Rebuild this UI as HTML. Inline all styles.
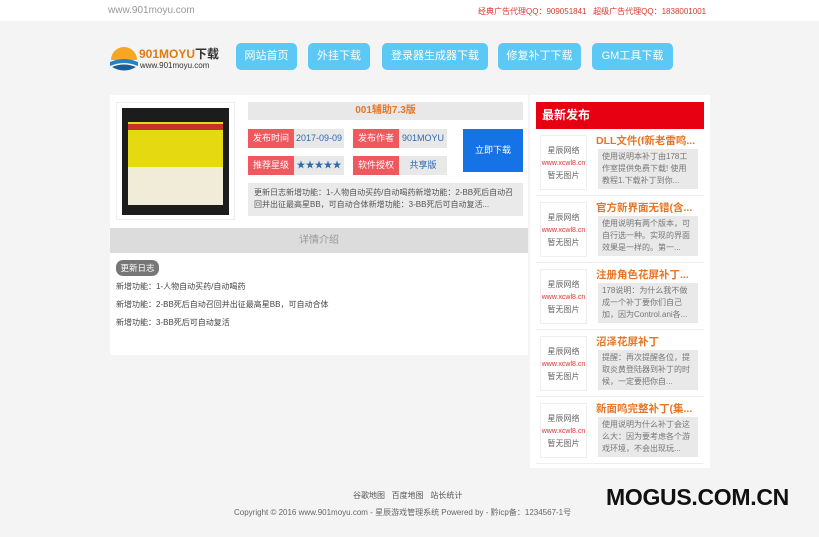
<!DOCTYPE html><html><head><meta charset="utf-8"><style>
*{margin:0;padding:0;box-sizing:border-box}
body{width:819px;height:537px;background:#f4f4f4;font-family:"Liberation Sans","Noto Sans CJK SC",sans-serif;position:relative;overflow:hidden;font-size:9px;color:#555}
.a{position:absolute}
.nav{position:absolute;top:43px;height:27px;background:#5bc8f5;color:#fff;border-radius:5px;font-size:11px;line-height:27px;text-align:center}
.lab{position:absolute;height:19px;line-height:19px;text-align:center;font-size:9px}
.red{background:#f0585e;color:#fff}
.gr{background:#e8e8e8;color:#2b6bb0}
.it{position:absolute;left:536px;width:168px;height:66px;border-bottom:1px solid #eee}
.it .im{position:absolute;left:4px;top:5px;width:47px;height:55px;border:1px solid #eee;text-align:center;font-size:8px;color:#666;padding-top:9px;line-height:12px}
.it .t{position:absolute;left:60px;top:3px;font-size:10.5px;font-weight:bold;color:#e57628;white-space:nowrap}
.it .d{position:absolute;left:62px;top:19px;width:100px;height:40px;background:#e9e9e9;font-size:8px;line-height:12px;color:#777;padding:2px 4px;overflow:hidden}
</style></head><body>
<div class="a" style="left:0;top:0;width:819px;height:21px;background:#fff"></div>
<div class="a" style="left:108px;top:5px;font-size:10px;color:#999">www.901moyu.com</div>
<div class="a" style="left:478px;top:6px;font-size:8px;color:#d9382f;white-space:nowrap">经典广告代理QQ：909051841&nbsp;&nbsp;&nbsp;超级广告代理QQ：1838001001</div>
<svg class="a" style="left:109px;top:43px" width="30" height="30"><path d="M2 17 A13 13 0 0 1 28 17Z" fill="#f5a623"/><path d="M1 19 Q15 13 29 19 L29 23 Q15 17 1 23Z" fill="#2a7fc0"/><path d="M3 24 Q15 19 27 24 Q15 31 3 24Z" fill="#1a5c95"/></svg>
<div class="a" style="left:139px;top:45px;font-size:12px;font-weight:bold;color:#e07b10">901MOYU<span style="color:#333">下载</span></div>
<div class="a" style="left:140px;top:61px;font-size:8px;color:#333">www.901moyu.com</div>
<div class="nav" style="left:236px;width:61px">网站首页</div>
<div class="nav" style="left:308px;width:62px">外挂下载</div>
<div class="nav" style="left:382px;width:106px">登录器生成器下载</div>
<div class="nav" style="left:498px;width:83px">修复补丁下载</div>
<div class="nav" style="left:592px;width:81px">GM工具下载</div>

<div class="a" style="left:110px;top:95px;width:418px;height:260px;background:#fff"></div>
<div class="a" style="left:116px;top:102px;width:119px;height:118px;border:1px solid #eee"></div>
<div class="a" style="left:122px;top:108px;width:107px;height:107px;background:#1c1c1c"></div>
<div class="a" style="left:128px;top:122px;width:95px;height:45px;background:#e5d912"></div>
<div class="a" style="left:128px;top:167px;width:95px;height:38px;background:#f1ecd8"></div>
<div class="a" style="left:128px;top:124px;width:95px;height:6px;background:#c7322a"></div>
<div class="a" style="left:248px;top:102px;width:275px;height:18px;background:#e8e8e8;color:#e57628;font-size:10px;font-weight:bold;text-align:center;line-height:18px">001辅助7.3版</div>
<div class="lab red" style="left:248px;top:129px;width:46px">发布时间</div>
<div class="lab gr" style="left:294px;top:129px;width:50px">2017-09-09</div>
<div class="lab red" style="left:353px;top:129px;width:46px">发布作者</div>
<div class="lab gr" style="left:399px;top:129px;width:48px">901MOYU</div>
<div class="lab red" style="left:248px;top:156px;width:46px">推荐星级</div>
<div class="lab gr" style="left:294px;top:156px;width:50px">★★★★★</div>
<div class="lab red" style="left:353px;top:156px;width:46px">软件授权</div>
<div class="lab gr" style="left:399px;top:156px;width:48px">共享版</div>
<div class="a" style="left:463px;top:129px;width:60px;height:43px;background:#1673e6;color:#fff;font-size:9px;text-align:center;line-height:43px">立即下载</div>
<div class="a" style="left:248px;top:183px;width:275px;height:33px;background:#eaeaea;font-size:8px;line-height:12px;color:#555;padding:4px 6px">更新日志新增功能：1-人物自动买药/自动喝药新增功能：2-BB死后自动召回并出征最高星BB，可自动合体新增功能：3-BB死后可自动复活...</div>
<div class="a" style="left:110px;top:228px;width:418px;height:25px;background:#dcdcdc;color:#999;font-size:10px;text-align:center;line-height:25px">详情介绍</div>
<div class="a" style="left:116px;top:260px;width:43px;height:16px;background:#777;color:#fff;border-radius:7px;font-size:8.5px;text-align:center;line-height:16px">更新日志</div>
<div class="a" style="left:116px;top:281px;font-size:8px;color:#444">新增功能：1-人物自动买药/自动喝药</div>
<div class="a" style="left:116px;top:299px;font-size:8px;color:#444">新增功能：2-BB死后自动召回并出征最高星BB，可自动合体</div>
<div class="a" style="left:116px;top:317px;font-size:8px;color:#444">新增功能：3-BB死后可自动复活</div>

<div class="a" style="left:530px;top:95px;width:180px;height:373px;background:#fff"></div>
<div class="a" style="left:536px;top:102px;width:168px;height:27px;background:#e60012;color:#fff;font-size:12px;font-weight:bold;line-height:27px;padding-left:6px">最新发布</div>
<div class="it" style="top:130px"><div class="im">星辰网络<br><span style="color:#d33;font-size:7px">www.xcwl8.cn</span><br>暂无图片</div><div class="t">DLL文件(f新老雷鸣...</div><div class="d">使用说明本补丁由178工作室提供免费下载! 使用教程1.下载补丁到你...</div></div>
<div class="it" style="top:197px"><div class="im">星辰网络<br><span style="color:#d33;font-size:7px">www.xcwl8.cn</span><br>暂无图片</div><div class="t">官方新界面无错(含...</div><div class="d">使用说明有两个版本，可自行选一种。实现的界面效果是一样的。第一...</div></div>
<div class="it" style="top:264px"><div class="im">星辰网络<br><span style="color:#d33;font-size:7px">www.xcwl8.cn</span><br>暂无图片</div><div class="t">注册角色花屏补丁...</div><div class="d">178说明：为什么我不做成一个补丁要你们自己加，因为Control.ani各...</div></div>
<div class="it" style="top:331px"><div class="im">星辰网络<br><span style="color:#d33;font-size:7px">www.xcwl8.cn</span><br>暂无图片</div><div class="t">沼泽花屏补丁</div><div class="d">提醒：再次提醒各位，提取炎黄登陆器到补丁的时候，一定要把你自...</div></div>
<div class="it" style="top:398px"><div class="im">星辰网络<br><span style="color:#d33;font-size:7px">www.xcwl8.cn</span><br>暂无图片</div><div class="t">新面鸣完整补丁(集...</div><div class="d">使用说明为什么补丁会这么大：因为要考虑各个游戏环境，不会出现玩...</div></div>

<div class="a" style="left:353px;top:490px;font-size:8px;color:#555">谷歌地图&nbsp;&nbsp;&nbsp;百度地图&nbsp;&nbsp;&nbsp;站长统计</div>
<div class="a" style="left:234px;top:507px;font-size:8px;color:#666">Copyright © 2016 www.901moyu.com - 星辰游戏管理系统 Powered by - 黔icp备：1234567-1号</div>
<div class="a" style="left:606px;top:484px;font-size:23px;font-weight:bold;color:#111;letter-spacing:-0.3px">MOGUS.COM.CN</div>
</body></html>
